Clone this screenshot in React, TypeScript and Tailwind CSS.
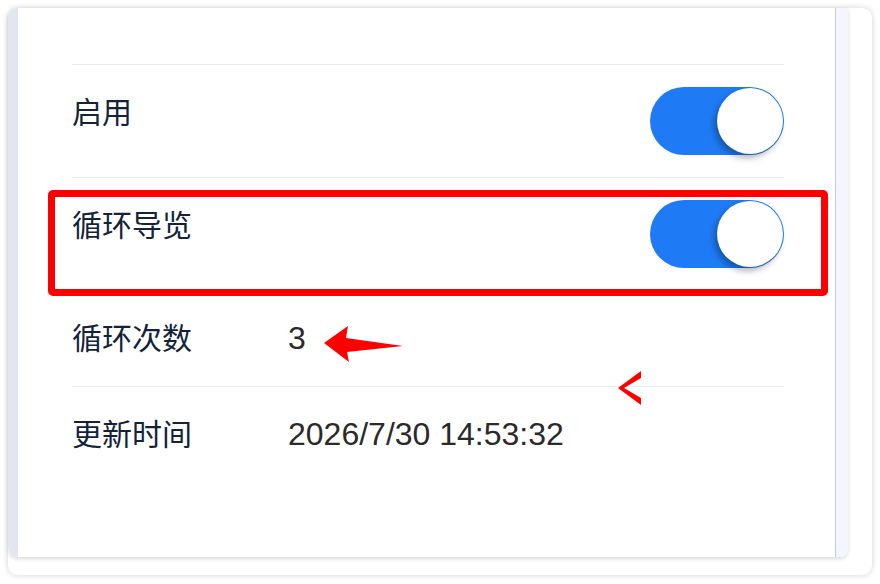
import React from 'react';

// settings rows of the tour config panel
type Row = { label: string; value?: string; toggle?: boolean; highlight?: boolean; last?: boolean };

const rows: Row[] = [
  { label: '启用', toggle: true },
  { label: '循环导览', toggle: true, highlight: true },
  { label: '循环次数', value: '3' },
  { label: '更新时间', value: '2026/7/30 14:53:32', last: true },
];

const Toggle: React.FC = () => (
  <div className="relative w-[134px] h-[68px] rounded-full bg-[#1f7bf5] shrink-0">
    <div className="absolute right-[1px] top-[1px] w-[66px] h-[66px] rounded-full bg-white shadow-[-3px_4px_6px_rgba(0,0,0,0.3)]" />
  </div>
);

const App: React.FC = () => {
  return (
    <div className="min-h-screen bg-white p-2">
      <div className="w-[864px] h-[567px] rounded-[10px] bg-white shadow-[0_0_6px_rgba(0,0,0,0.18)]">
        <div className="w-[840px] h-[549px] flex rounded-tl-[10px] rounded-bl-[10px] rounded-br-[8px] overflow-hidden shadow-[0_2px_4px_rgba(0,0,0,0.15)]">
          <div className="w-[10px] bg-[#e1e6f0]" />
          <div className="relative flex-1 bg-white pt-[56px] pl-[54px] pr-[51px]">
            <div className="border-t border-[#e9ebef]">
              {rows.map((r) => (
                <div
                  key={r.label}
                  className={`relative flex items-start justify-between py-[22px] ${r.last ? '' : 'border-b border-[#e9ebef]'}`}
                >
                  <div className="flex items-start min-h-[51px]">
                    <div
                      className="w-[216px] shrink-0 text-[30px] leading-[46px] text-[#12233a]"
                      style={{ fontFamily: '"Noto Sans CJK SC", sans-serif' }}
                    >
                      {r.label}
                    </div>
                    {r.value && (
                      <div
                        className="text-[32px] leading-[50px] text-[#2a2a2a]"
                        style={{ fontFamily: '"Liberation Sans", Arial, sans-serif' }}
                      >
                        {r.value}
                      </div>
                    )}
                  </div>
                  {r.toggle && <Toggle />}
                  {r.highlight && (
                    <div className="absolute top-[12px] left-[-24px] w-[780px] h-[106px] border-[7px] border-[#ff0000] rounded-[5px]" />
                  )}
                </div>
              ))}
            </div>

            {/* annotation arrows */}
            <svg className="absolute left-[306px] top-[318px]" width="80" height="37" viewBox="0 0 80 37">
              <polygon points="0,17 24,0 22,12 79,20 23,26 25,36" fill="#ff0000" />
            </svg>
            <svg className="absolute left-[600px] top-[363px]" width="24" height="35" viewBox="0 0 24 35">
              <polygon points="23,0 23,7 6,17 23,27 23,34 0,17" fill="#ff0000" />
            </svg>
          </div>
          <div className="w-[13px] border-l border-[#c5cad3] bg-[#f3f7fd]" />
        </div>
      </div>
    </div>
  );
};

export default App;
